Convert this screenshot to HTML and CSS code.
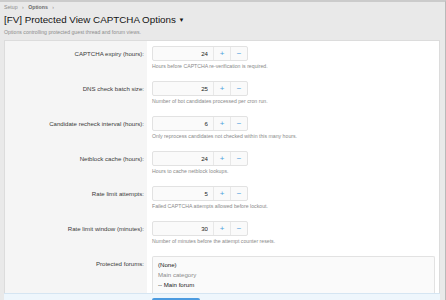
FILE: index.html
```html
<!doctype html>
<html lang="en">
<head>
<meta charset="UTF-8">
<title>[FV] Protected View CAPTCHA Options</title>
<link rel="stylesheet" href="styles.css">
</head>
<body>
<div id="page">
<div class="crumbs">Setup <span class="sep">›</span> <b>Options</b> <span class="sep">›</span></div>
<h1>[FV] Protected View CAPTCHA Options <span class="caret">▼</span></h1>
<p class="desc">Options controlling protected guest thread and forum views.</p>
<form class="block">
<div class="row">
<label class="row-label">CAPTCHA expiry (hours):</label>
<div class="row-ctrl">
<div class="spin"><input value="24"><button type="button">+</button><button type="button">−</button></div>
<div class="hint">Hours before CAPTCHA re-verification is required.</div>
</div>
</div>
<div class="row">
<label class="row-label">DNS check batch size:</label>
<div class="row-ctrl">
<div class="spin"><input value="25"><button type="button">+</button><button type="button">−</button></div>
<div class="hint">Number of bot candidates processed per cron run.</div>
</div>
</div>
<div class="row">
<label class="row-label">Candidate recheck interval (hours):</label>
<div class="row-ctrl">
<div class="spin"><input value="6"><button type="button">+</button><button type="button">−</button></div>
<div class="hint">Only reprocess candidates not checked within this many hours.</div>
</div>
</div>
<div class="row">
<label class="row-label">Netblock cache (hours):</label>
<div class="row-ctrl">
<div class="spin"><input value="24"><button type="button">+</button><button type="button">−</button></div>
<div class="hint">Hours to cache netblock lookups.</div>
</div>
</div>
<div class="row">
<label class="row-label">Rate limit attempts:</label>
<div class="row-ctrl">
<div class="spin"><input value="5"><button type="button">+</button><button type="button">−</button></div>
<div class="hint">Failed CAPTCHA attempts allowed before lockout.</div>
</div>
</div>
<div class="row">
<label class="row-label">Rate limit window (minutes):</label>
<div class="row-ctrl">
<div class="spin"><input value="30"><button type="button">+</button><button type="button">−</button></div>
<div class="hint">Number of minutes before the attempt counter resets.</div>
</div>
</div>
<div class="row row-last">
<label class="row-label">Protected forums:</label>
<div class="row-ctrl">
<div class="select">
<div class="opt">(None)</div>
<div class="opt grp">Main category</div>
<div class="opt">-- Main forum</div>
</div>
</div>
</div>
<div class="submit-bar"><button type="button" class="save">Save</button></div>
</form>
</div>
</body>
</html>
```
FILE: styles.css
```css
body {
margin: 0;
background: #e9e9e9;
font-family: "Liberation Sans", Arial, sans-serif;
color: #333;
overflow: hidden;
height: 300px;
}
#page {
border-top: 2px solid #cbcbcb;
border-right: 1px solid #b9b9b9;
padding: 0 5px 0 4px;
height: 298px;
overflow: hidden;
}
.crumbs {
font-size: 5.2px;
line-height: 8px;
padding-top: 1px;
color: #8d8d8d;
}
.crumbs b {
color: #6a6a6a;
}
.crumbs .sep {
margin: 0 3px;
}
h1 {
margin: 3px 0 0;
font-size: 9.8px;
line-height: 12px;
font-weight: normal;
color: #141414;
}
.caret {
font-size: 6px;
vertical-align: 1px;
}
.desc {
margin: 3px 0 0;
font-size: 5.2px;
line-height: 7px;
color: #8d8d8d;
}
.block {
margin-top: 4px;
background: #fff;
border: 1px solid #dcdcdc;
border-bottom: none;
}
.row {
display: grid;
grid-template-columns: 142px 1fr;
}
.row-label {
background: #f5f5f5;
text-align: right;
font-size: 6.1px;
line-height: 15px;
padding: 5px 3px 6px 0;
color: #3a3a3a;
}
.row-ctrl {
padding: 5px 4px 6px 5px;
}
.row-last .row-ctrl {
padding-bottom: 0;
}
.spin {
display: flex;
width: 96px;
height: 15px;
box-sizing: border-box;
border: 1px solid #e2e2e2;
border-radius: 2px;
background: #fafafa;
}
.spin input {
width: 60px;
box-sizing: border-box;
border: none;
background: none;
text-align: right;
font-family: inherit;
font-size: 6.1px;
padding: 0 5px 0 0;
color: #222;
}
.spin button {
width: 18px;
border: none;
border-left: 1px solid #e8e8e8;
background: none;
padding: 0;
font-family: inherit;
font-size: 8px;
color: #4c9fdc;
}
.hint {
margin-top: 2px;
font-size: 5.2px;
line-height: 7px;
color: #8a8a8a;
}
.select {
height: 36px;
border: 1px solid #e2e2e2;
border-bottom: none;
border-radius: 2px 2px 0 0;
background: #fafafa;
padding: 3px 5px;
font-size: 6.1px;
line-height: 10px;
color: #222;
}
.grp {
color: #8a8a8a;
}
.submit-bar {
position: fixed;
left: 4px;
right: 6px;
top: 293px;
height: 7px;
background: #eef6fc;
border-top: 1px solid #d5e5f2;
padding-left: 148px;
}
.save {
margin-top: 4px;
width: 48px;
height: 10px;
border: none;
border-radius: 2px;
background: #4c9be0;
color: #fff;
font-family: inherit;
font-size: 6px;
line-height: 10px;
padding: 0;
vertical-align: top;
}
```
